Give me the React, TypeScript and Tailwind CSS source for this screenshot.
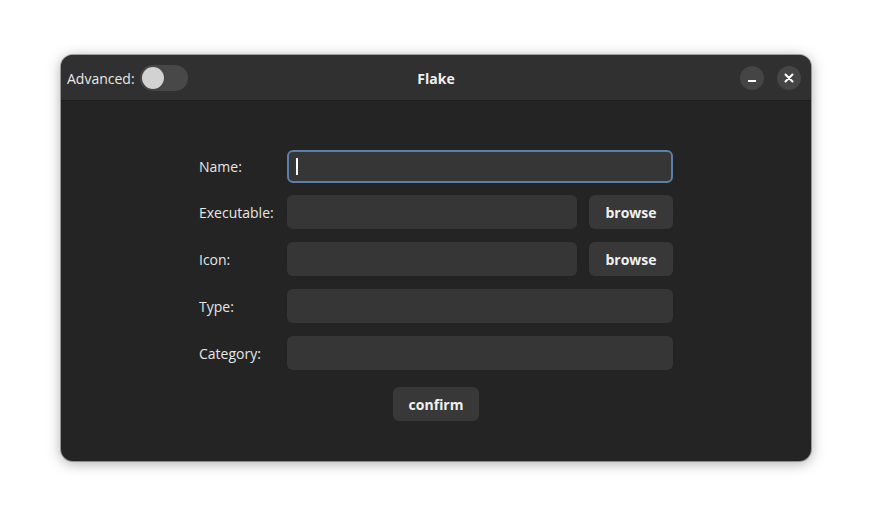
import React, { useState } from 'react';

const fields = [
{ id: 'exec', label: 'Executable:', browse: true },
{ id: 'icon', label: 'Icon:', browse: true },
{ id: 'type', label: 'Type:', browse: false },
{ id: 'category', label: 'Category:', browse: false }];


export default function App() {
  const [advanced, setAdvanced] = useState(false);
  return (
    <div
      className="w-[872px] h-[528px] bg-white pt-[55px] pl-[61px]"
      style={{ fontFamily: '"Open Sans", "Noto Sans", sans-serif' }}>
      
      {/* Window */}
      <div className="w-[750px] h-[406px] rounded-[12px] overflow-hidden bg-[#242424] shadow-[0_2px_14px_rgba(0,0,0,0.35)] ring-1 ring-black/30 flex flex-col">
        {/* Header bar */}
        <header className="h-[46px] pt-[1px] bg-[#303030] border-b border-[#1c1c1c] flex items-center px-[6px] relative flex-shrink-0">
          <div className="flex items-center gap-[5px]">
            <span className="text-[14px] text-[#e8e8e8]">Advanced:</span>
            <button
              onClick={() => setAdvanced(!advanced)}
              className={`w-[48px] h-[26px] rounded-full p-[2px] flex items-center ${advanced ? 'bg-[#3584e4] justify-end' : 'bg-[#484848] justify-start'}`}>
              
              <span className="w-[22px] h-[22px] rounded-full bg-[#d2d2d2] shadow-sm" />
            </button>
          </div>
          <div className="absolute inset-0 pt-[1px] flex items-center justify-center pointer-events-none">
            <span className="text-[14px] font-bold text-[#f0f0f0]">Flake</span>
          </div>
          <div className="ml-auto flex items-center gap-[13px] pr-[4px]">
            <button className="w-[24px] h-[24px] rounded-full bg-[#454545] flex items-center justify-center">
              <span className="block w-[8px] h-[2px] bg-white mt-[5px]" />
            </button>
            <button className="w-[24px] h-[24px] rounded-full bg-[#454545] flex items-center justify-center">
              <svg width="10" height="10" viewBox="0 0 10 10">
                <path d="M1.5 1.5 L8.5 8.5 M8.5 1.5 L1.5 8.5" stroke="white" strokeWidth="2" strokeLinecap="round" />
              </svg>
            </button>
          </div>
        </header>

        {/* Form */}
        <div className="flex-1 flex flex-col items-center pt-[49px]">
          <div className="w-[474px] flex flex-col gap-[13px]">
            <div className="flex items-center h-[32px]">
              <span className="w-[88px] text-[14px] text-[#e6e6e6]">Name:</span>
              <div className="flex-1 h-[33px] rounded-[6px] bg-[#363636] border-2 border-[#5b7fa8] flex items-center pl-[7px]">
                <span className="block w-[1.5px] h-[17px] bg-white" />
              </div>
            </div>
            {fields.map((f) =>
            <div key={f.id} className="flex items-center h-[34px] gap-[12px]">
                <span className="w-[76px] text-[14px] text-[#e6e6e6]">{f.label}</span>
                <div className="flex-1 h-[34px] rounded-[6px] bg-[#363636]" />
                {f.browse &&
              <button className="w-[84px] h-[34px] rounded-[6px] bg-[#383838] text-[14px] font-bold text-[#f0f0f0]">
                    browse
                  </button>
              }
              </div>
            )}
            <div className="flex justify-center mt-[4px]">
              <button className="w-[86px] h-[34px] rounded-[6px] bg-[#383838] text-[14px] font-bold text-[#f0f0f0]">
                confirm
              </button>
            </div>
          </div>
        </div>
      </div>
    </div>);

}
